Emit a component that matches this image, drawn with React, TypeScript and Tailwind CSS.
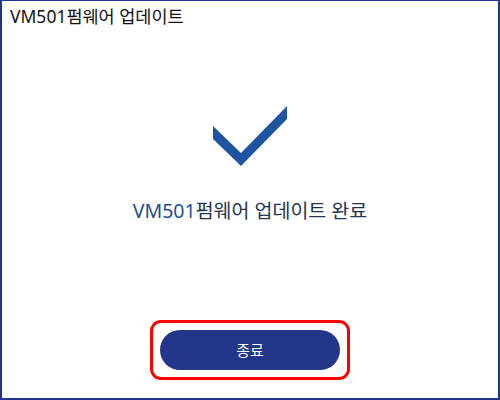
export default function App() {
  return (
    <div
      className="w-[500px] h-[400px] bg-white border-t border-l-2 border-r-2 border-b-2 border-[#24348a] flex flex-col"
      style={{ fontFamily: '"Noto Sans", "Noto Sans CJK KR", sans-serif' }}
    >
      <div className="pl-[8px] pt-[3px] text-[17.5px] leading-[24px] text-[#111]">VM501펌웨어 업데이트</div>

      <div className="flex justify-center mt-[78px]">
        <svg width="74" height="61" viewBox="0 0 74 61">
          <polygon points="0,20 28,47 74,0 74,13 28,60 0,33" fill="#1f55a0" />
        </svg>
      </div>

      <div className="mt-[30px] text-center text-[19.5px] leading-[28px] text-[#23344f]">
        <span className="text-[#1d4f8f]">VM501</span>펌웨어 업데이트 완료
      </div>

      <div className="flex-1" />

      <div className="flex justify-center mb-[18px]">
        <div className="border-[3px] border-[#ff0000] rounded-[11px] p-[7px]">
          <button className="w-[180px] h-[40px] rounded-full bg-[#243689] text-white text-[15px]">
            종료
          </button>
        </div>
      </div>
    </div>
  );
}
